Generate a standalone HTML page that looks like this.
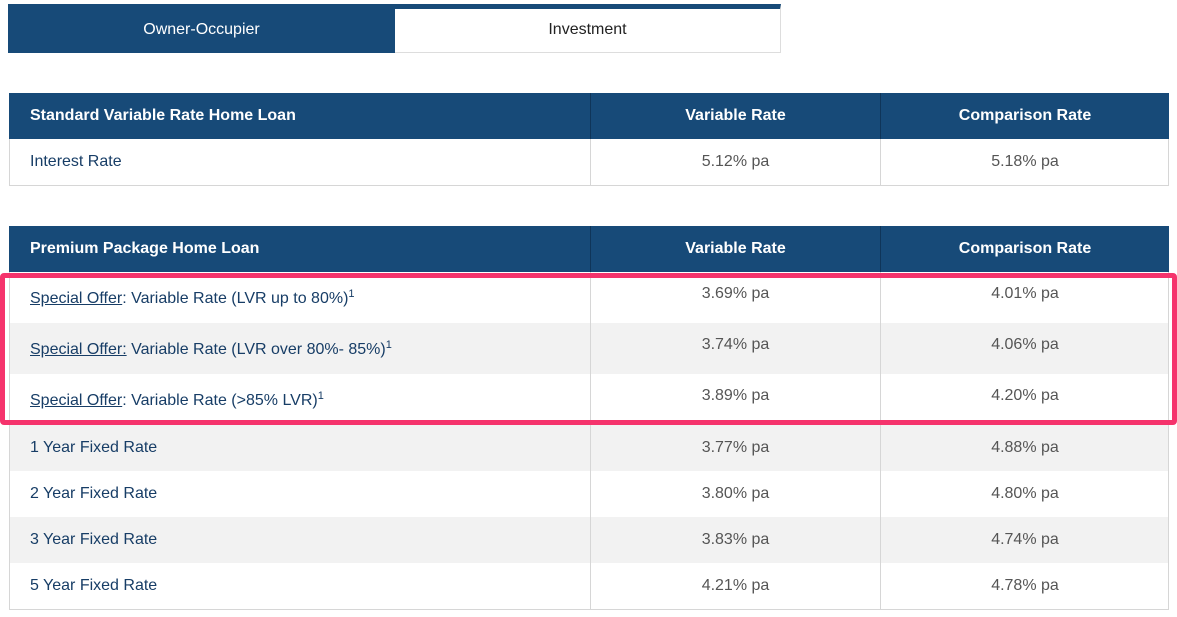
<!DOCTYPE html>
<html><head><meta charset="utf-8"><style>
*{margin:0;padding:0;box-sizing:border-box}
body{width:1177px;height:617px;background:#fff;font-family:"Liberation Sans",Arial,sans-serif;font-size:16px;position:relative;overflow:hidden}
.abs{position:absolute}
.tab1{left:8px;top:4px;width:387px;height:49px;background:#174a78;color:#fff;text-align:center;line-height:51px}
.tab2{left:395px;top:4px;width:386px;height:49px;background:#fff;border-top:5px solid #174a78;border-right:1px solid #ddd;border-bottom:1px solid #ddd;color:#222;text-align:center;line-height:42px}
.row{position:absolute;left:9px;width:1160px;border-left:1px solid #d6d6d6;border-right:1px solid #d6d6d6}
.row div{position:absolute;top:0;height:100%}
.c1{left:0;width:580px;padding-left:20px}
.c2{left:580px;width:290px;border-left:1px solid #d6d6d6;text-align:center}
.c3{left:870px;width:289px;border-left:1px solid #d6d6d6;text-align:center}
.hd{background:#174a78;color:#fff;font-weight:bold;height:46px;line-height:46px;border-color:#174a78}
.hd .c2,.hd .c3{border-left-color:#0f3559}
.r{height:46px;line-height:46px;color:#555}
.r .c1{color:#173d66}
.t{height:51px;color:#555}
.t .c1{color:#173d66;line-height:54px}
.t .c2,.t .c3{line-height:44px}
.g{background:#f2f2f2}
u{text-decoration:underline}
sup{font-size:11px;vertical-align:6px;line-height:0}
</style></head><body>
<div class="abs tab1">Owner-Occupier</div>
<div class="abs tab2">Investment</div>

<div class="row hd" style="top:93px"><div class="c1">Standard Variable Rate Home Loan</div><div class="c2">Variable Rate</div><div class="c3">Comparison Rate</div></div>
<div class="row r" style="top:139px;border-bottom:1px solid #d6d6d6;height:47px"><div class="c1">Interest Rate</div><div class="c2">5.12% pa</div><div class="c3">5.18% pa</div></div>

<div class="row hd" style="top:226px"><div class="c1">Premium Package Home Loan</div><div class="c2">Variable Rate</div><div class="c3">Comparison Rate</div></div>
<div class="row t" style="top:272px"><div class="c1"><u>Special Offer</u>: Variable Rate (LVR up to 80%)<sup>1</sup></div><div class="c2">3.69% pa</div><div class="c3">4.01% pa</div></div>
<div class="row t g" style="top:323px"><div class="c1"><u>Special Offer:</u> Variable Rate (LVR over 80%- 85%)<sup>1</sup></div><div class="c2">3.74% pa</div><div class="c3">4.06% pa</div></div>
<div class="row t" style="top:374px"><div class="c1"><u>Special Offer</u>: Variable Rate (&gt;85% LVR)<sup>1</sup></div><div class="c2">3.89% pa</div><div class="c3">4.20% pa</div></div>
<div class="row r g" style="top:425px"><div class="c1">1 Year Fixed Rate</div><div class="c2">3.77% pa</div><div class="c3">4.88% pa</div></div>
<div class="row r" style="top:471px"><div class="c1">2 Year Fixed Rate</div><div class="c2">3.80% pa</div><div class="c3">4.80% pa</div></div>
<div class="row r g" style="top:517px"><div class="c1">3 Year Fixed Rate</div><div class="c2">3.83% pa</div><div class="c3">4.74% pa</div></div>
<div class="row r" style="top:563px;border-bottom:1px solid #d6d6d6;height:47px"><div class="c1">5 Year Fixed Rate</div><div class="c2">4.21% pa</div><div class="c3">4.78% pa</div></div>

<div class="abs" style="left:0;top:273px;width:1177px;height:152px;border:5px solid #f5336c;border-radius:4px"></div>
</body></html>
